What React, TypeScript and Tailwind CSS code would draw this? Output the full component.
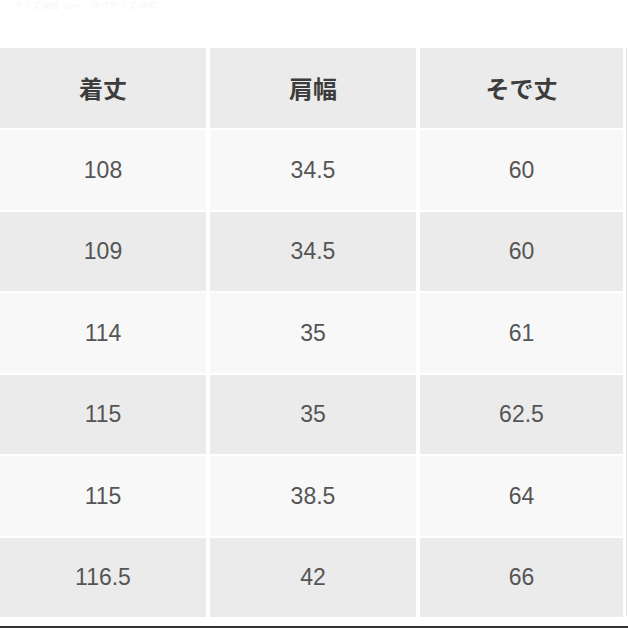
import React from 'react';

const rows: [string, string, string][] = [
  ['108', '34.5', '60'],
  ['109', '34.5', '60'],
  ['114', '35', '61'],
  ['115', '35', '62.5'],
  ['115', '38.5', '64'],
  ['116.5', '42', '66'],
];

const headers = ['着丈', '肩幅', 'そで丈'];

export default function App() {
  return (
    <div className="flex h-[628px] w-[628px] flex-col overflow-hidden bg-white">
      {/* faint caption at the top */}
      <div className="h-[48px] pl-[14px] pt-[1px] text-[9px] leading-[10px] text-[#f7f7f7] [font-family:'Noto_Sans_CJK_JP',sans-serif]">
        サイズ詳細（cm） 実寸サイズ 参考
      </div>

      <div className="flex">
        <div className="grid w-[623px] grid-cols-[206px_206px_203px] gap-x-[4px] gap-y-[2px]">
          {headers.map((h) => (
            <div
              key={h}
              className="flex h-[80px] items-center justify-center bg-[#ebebeb] text-[24px] font-bold text-[#3c3c3c] [font-family:'Noto_Sans_CJK_JP',sans-serif]"
            >
              {h}
            </div>
          ))}
          {rows.map((row, i) =>
            row.map((v, j) => (
              <div
                key={`${i}-${j}`}
                className={
                  i % 2 === 0
                    ? 'flex h-[79.5px] items-center justify-center bg-[#f8f8f8] text-[23px] text-[#555555] [font-family:"Liberation_Sans",Arial,sans-serif]'
                    : 'flex h-[79.5px] items-center justify-center bg-[#ebebeb] text-[23px] text-[#555555] [font-family:"Liberation_Sans",Arial,sans-serif]'
                }
              >
                {v}
              </div>
            ))
          )}
        </div>
        <div className="ml-[3px] w-[1px] bg-[#e6e6e6]" />
      </div>

      <div className="flex-1" />
      <div className="h-[2px] bg-[#333333]" />
    </div>
  );
}
